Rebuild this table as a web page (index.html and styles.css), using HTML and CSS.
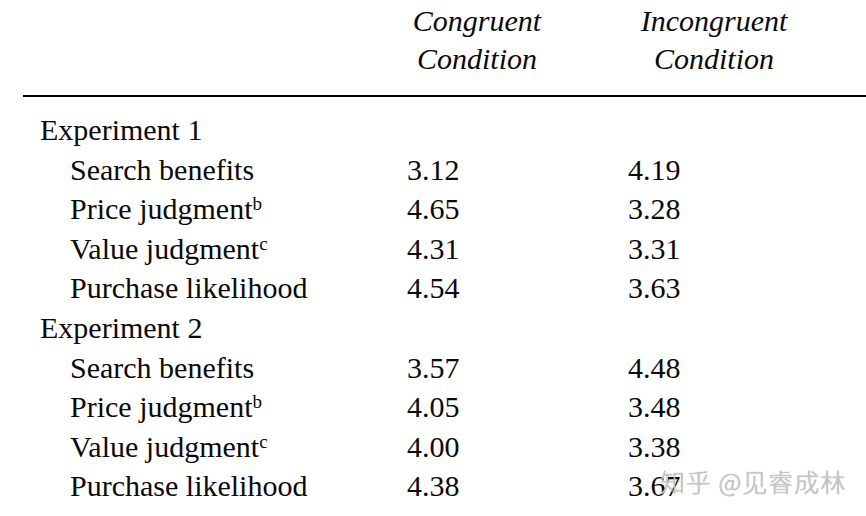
FILE: index.html
```html
<!DOCTYPE html>
<html>
<head>
<meta charset="utf-8">
<link rel="stylesheet" href="styles.css">
</head>
<body>
<div class="page">
  <div class="head">
    <div class="hcell hc1">Congruent<br>Condition</div>
    <div class="hcell hc2">Incongruent<br>Condition</div>
  </div>
  <div class="rule"></div>
  <div class="body">
    <div class="group">Experiment 1</div>
    <div class="label">Search benefits</div><div class="num">3.12</div><div class="num">4.19</div>
    <div class="label">Price judgment<sup>b</sup></div><div class="num">4.65</div><div class="num">3.28</div>
    <div class="label">Value judgment<sup>c</sup></div><div class="num">4.31</div><div class="num">3.31</div>
    <div class="label">Purchase likelihood</div><div class="num">4.54</div><div class="num">3.63</div>
    <div class="group">Experiment 2</div>
    <div class="label">Search benefits</div><div class="num">3.57</div><div class="num">4.48</div>
    <div class="label">Price judgment<sup>b</sup></div><div class="num">4.05</div><div class="num">3.48</div>
    <div class="label">Value judgment<sup>c</sup></div><div class="num">4.00</div><div class="num">3.38</div>
    <div class="label">Purchase likelihood</div><div class="num">4.38</div><div class="num">3.67</div>
  </div>
  <div class="watermark">知乎 @见睿成林</div>
</div>
</body>
</html>
```

FILE: styles.css
```css
html, body {
  margin: 0;
  padding: 0;
  background: #fff;
}
.page {
  position: relative;
  width: 866px;
  height: 516px;
  overflow: hidden;
  font-family: "Liberation Serif", "Times New Roman", serif;
  font-size: 30px;
  color: #0a0a0a;
}
.head {
  display: flex;
  padding-top: 2px;
  padding-left: 397px;
  gap: 77px;
  font-style: italic;
  line-height: 38px;
}
.hcell {
  width: 160px;
  text-align: center;
  white-space: nowrap;
}
.rule {
  margin-top: 17px;
  margin-left: 23px;
  border-top: 2px solid #000;
}
.body {
  display: grid;
  grid-template-columns: 367px 221px 1fr;
  padding-top: 13px;
  padding-left: 40px;
  line-height: 39.6px;
}
.group {
  grid-column: 1 / 4;
}
.label {
  padding-left: 30px;
  white-space: nowrap;
}
.label sup {
  font-size: 19px;
  line-height: 0;
  vertical-align: 9px;
}
.watermark {
  position: absolute;
  left: 660px;
  top: 466px;
  font-family: "Noto Sans CJK SC", "Noto Sans", sans-serif;
  font-size: 25px;
  font-weight: 300;
  letter-spacing: 1px;
  line-height: 30px;
  color: #c8c8c8;
  text-shadow: 0 0 1px #9a9a9a;
  white-space: nowrap;
}
```
